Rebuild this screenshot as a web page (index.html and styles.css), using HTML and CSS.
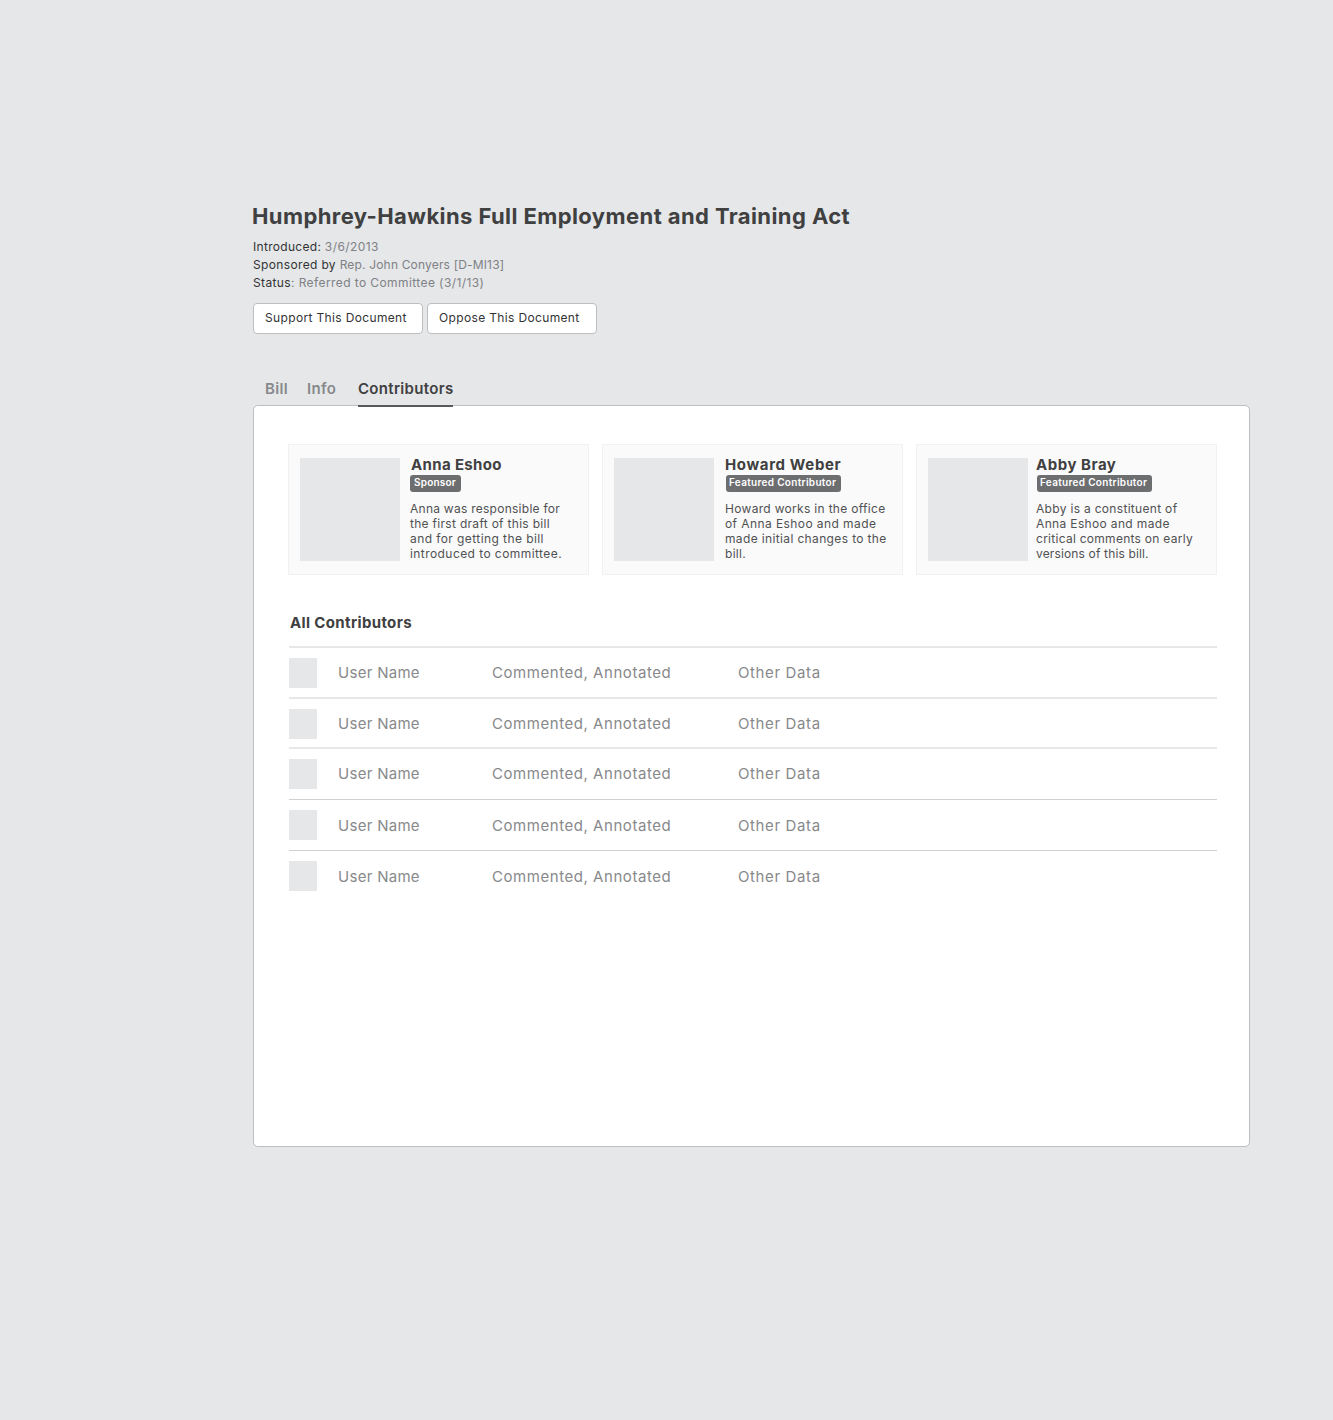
FILE: index.html
```
<!DOCTYPE html>
<html lang="en">
<head>
<meta charset="utf-8">
<title>Humphrey-Hawkins Full Employment and Training Act</title>
<link rel="stylesheet" href="styles.css">
</head>
<body>
<main class="page">
  <header class="bill-header">
    <h1 class="title">Humphrey-Hawkins Full Employment and Training Act</h1>
    <div class="meta">
      <p class="meta-line intro"><span class="label">Introduced:</span> <span class="value">3/6/2013</span></p>
      <p class="meta-line sponsor"><span class="label">Sponsored by</span> <span class="value">Rep. John Conyers [D-MI13]</span></p>
      <p class="meta-line status"><span class="label">Status</span><span class="value">: Referred to Committee (3/1/13)</span></p>
    </div>
    <div class="actions">
      <button class="button" type="button">Support This Document</button>
      <button class="button" type="button">Oppose This Document</button>
    </div>
  </header>
  <nav class="tabs">
    <a class="tab bill">Bill</a>
    <a class="tab info">Info</a>
    <a class="tab active">Contributors</a>
  </nav>
  <section class="panel">
    <div class="cards">
      <article class="card anna">
        <div class="photo"></div>
        <div class="card-text">
          <h2 class="name">Anna Eshoo</h2>
          <div class="badge">Sponsor</div>
          <p class="bio"><span class="l1">Anna was responsible for</span><br><span class="l2">the first draft of this bill</span><br><span class="l3">and for getting the bill</span><br><span class="l4">introduced to committee.</span></p>
        </div>
      </article>
      <article class="card howard">
        <div class="photo"></div>
        <div class="card-text">
          <h2 class="name">Howard Weber</h2>
          <div class="badge">Featured Contributor</div>
          <p class="bio"><span class="l1">Howard works in the office</span><br><span class="l2">of Anna Eshoo and made</span><br><span class="l3">made initial changes to the</span><br><span class="l4">bill.</span></p>
        </div>
      </article>
      <article class="card abby">
        <div class="photo"></div>
        <div class="card-text">
          <h2 class="name">Abby Bray</h2>
          <div class="badge">Featured Contributor</div>
          <p class="bio"><span class="l1">Abby is a constituent of</span><br><span class="l2">Anna Eshoo and made</span><br><span class="l3">critical comments on early</span><br><span class="l4">versions of this bill.</span></p>
        </div>
      </article>
    </div>
    <h2 class="list-title">All Contributors</h2>
    <ul class="list">
      <li class="row"><div class="avatar"></div><span class="user">User Name</span><span class="activity">Commented, Annotated</span><span class="other">Other Data</span></li>
      <li class="row short"><div class="avatar"></div><span class="user">User Name</span><span class="activity">Commented, Annotated</span><span class="other">Other Data</span></li>
      <li class="row tall"><div class="avatar"></div><span class="user">User Name</span><span class="activity">Commented, Annotated</span><span class="other">Other Data</span></li>
      <li class="row fine"><div class="avatar"></div><span class="user">User Name</span><span class="activity">Commented, Annotated</span><span class="other">Other Data</span></li>
      <li class="row fine"><div class="avatar"></div><span class="user">User Name</span><span class="activity">Commented, Annotated</span><span class="other">Other Data</span></li>
    </ul>
  </section>
</main>
</body>
</html>
```
FILE: styles.css
```
* { box-sizing: border-box; }
body, h1, h2, p, ul { margin: 0; padding: 0; }
body {
  min-height: 1420px;
  background: #e5e7e9;
  color: #404041;
  font-family: Inter, "Liberation Sans", sans-serif;
}

.page { width: 997px; margin-left: 253px; padding-top: 199px; }
.title {
  height: 34px; margin-left: -1px;
  font-size: 22px; line-height: 34px; font-weight: 700; letter-spacing: 0.41px; white-space: nowrap;
}

.meta { margin-top: 5px; }
.meta-line { height: 18px; font-size: 12px; line-height: 18px; color: #808184; letter-spacing: 0.3px; white-space: nowrap; }
.label { color: #333334; }
.intro .value { letter-spacing: 0.4px; }
.sponsor .label { letter-spacing: 0.35px; }
.sponsor .value { letter-spacing: 0.17px; }
.status .label { letter-spacing: 0.37px; }
.status .value { letter-spacing: 0.41px; }

.actions { display: flex; gap: 4px; margin-top: 11px; }
.button {
  display: flex; align-items: center;
  width: 170px; height: 31px; padding: 0 0 2px 11px;
  border: 1px solid #bcbec0; border-radius: 4px;
  background: #fff; color: #333334;
  font: 12px/18px Inter, "Liberation Sans", sans-serif; letter-spacing: 0.35px; white-space: nowrap;
}

.tabs { display: flex; height: 71px; padding: 44px 0 0 12px; }
.tab { height: 29px; font-size: 15px; line-height: 22px; font-weight: 600; color: #88898c; letter-spacing: 0.32px; white-space: nowrap; }
.bill { width: 42px; }
.info { width: 51px; }
.active { position: relative; z-index: 1; width: 95px; color: #404041; border-bottom: 2px solid #58595b; }

.panel {
  height: 742px; padding: 38px 32px 0 34px;
  border: 1px solid #bcbec0; border-radius: 5px; background: #fff;
}

.cards { display: flex; gap: 13px; }
.card {
  display: flex; flex: none; width: 301px; height: 131px; padding: 13px 0 0 11px;
  border: 1px solid #f0f1f1; background: #fafafa;
}
.photo { flex: none; width: 100px; height: 103px; background: #e5e7e9; }
.card-text { padding-left: 10px; }
.howard .card-text { padding-left: 11px; }
.abby .card-text { padding-left: 8px; }
.name { height: 17px; font-size: 15px; line-height: 14px; font-weight: 700; white-space: nowrap; }
.anna .name { margin-left: 1px; letter-spacing: 0.35px; }
.howard .name { letter-spacing: 0.64px; }
.abby .name { letter-spacing: 0.52px; }
.badge {
  width: 51px; height: 17px; padding-left: 4px; border-radius: 3px;
  background: #6d6e70; color: #fff;
  font-size: 10px; line-height: 15px; font-weight: 600; letter-spacing: 0.2px; white-space: nowrap;
}
.howard .badge, .abby .badge { width: 115px; padding-left: 3px; margin-left: 1px; letter-spacing: 0.31px; }
.bio { margin-top: 9px; font-size: 12px; line-height: 15px; color: #505153; white-space: nowrap; }
.anna .l1 { letter-spacing: 0.26px; }
.anna .l2 { letter-spacing: 0.3px; }
.anna .l3 { letter-spacing: 0.42px; }
.anna .l4 { letter-spacing: 0.43px; }
.howard .l1 { letter-spacing: 0.31px; }
.howard .l2 { letter-spacing: 0.42px; }
.howard .l3 { letter-spacing: 0.36px; }
.howard .l4 { letter-spacing: 0.3px; }
.abby .l1 { letter-spacing: 0.31px; }
.abby .l2 { letter-spacing: 0.35px; }
.abby .l3 { letter-spacing: 0.27px; }
.abby .l4 { letter-spacing: 0.15px; }

.list-title {
  height: 71px; padding: 38px 0 0 2px;
  font-size: 15px; line-height: 20px; font-weight: 700; letter-spacing: 0.36px;
}
.list { list-style: none; margin-left: 1px; }
.row {
  display: grid; grid-template-columns: 49px 154px 246px 1fr;
  height: 51px; border-top: 2px solid #e6e7e8;
  font-size: 15px; line-height: 49px; color: #88898b;
}
.short { height: 50px; }
.tall { height: 52px; }
.fine { border-top: 1px solid #d0d1d2; line-height: 51px; }
.avatar { width: 28px; height: 30px; margin-top: 10px; background: #e5e7e9; }
.user { letter-spacing: 0.29px; }
.activity { letter-spacing: 0.55px; }
.other { letter-spacing: 0.62px; }
```
